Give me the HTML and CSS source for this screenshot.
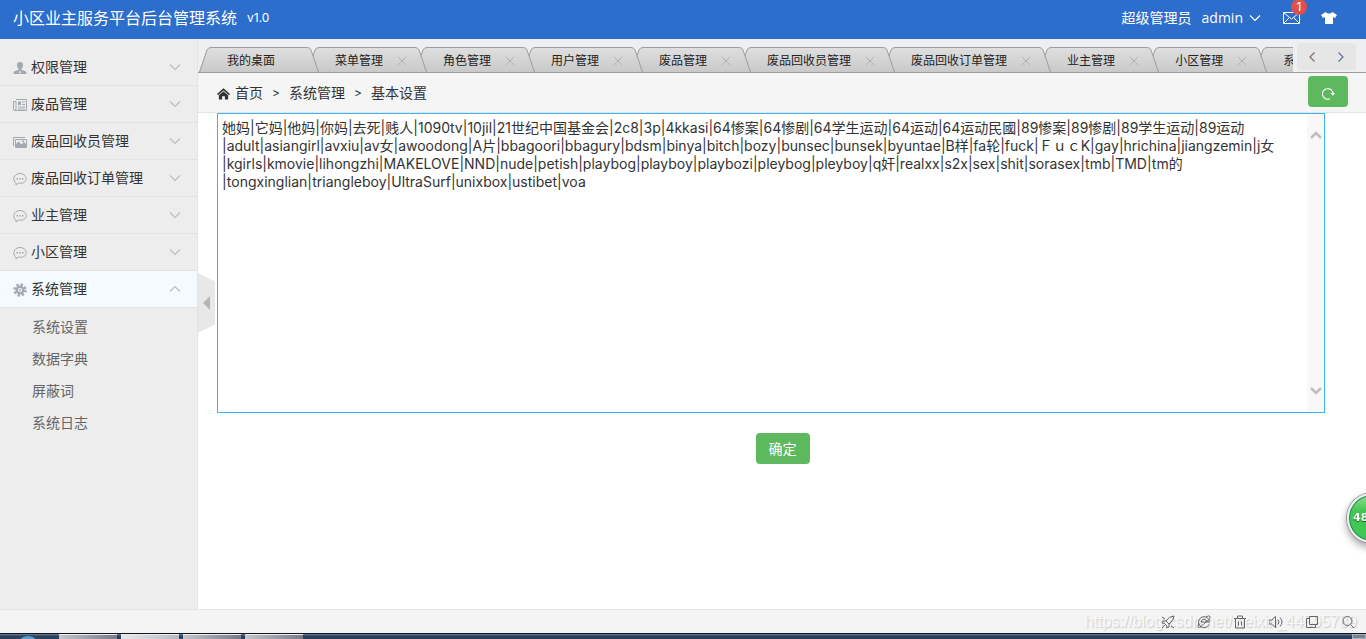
FILE: index.html
```
<!DOCTYPE html>
<html lang="zh-CN">
<head>
<meta charset="utf-8">
<title>小区业主服务平台后台管理系统</title>
<link rel="stylesheet" href="styles.css">
</head>
<body>
<svg class="defs" aria-hidden="true">
  <defs>
    <linearGradient id="tabFill" x1="0" y1="0" x2="0" y2="1"><stop offset="0" stop-color="#dfdfdf"/><stop offset="1" stop-color="#c9c9ca"/></linearGradient>
    <symbol id="down" viewBox="0 0 12 8"><path d="M1 1.5l5 5 5-5" fill="none" stroke="currentColor" stroke-width="1.1"/></symbol>
    <symbol id="chat" viewBox="0 0 14 14"><path d="M3 11.3C-.8 8.500 .3 1.500 7 1.500s8.500 8 2.500 9.500c-2 .5-3.500.2-4 0L3 13z" fill="none" stroke="currentColor"/><path d="M3.500 6h1.500v1.500H3.500zM6.300 6h1.500v1.500H6.300zM9 6h1.500v1.500H9z" fill="currentColor"/></symbol>
    <symbol id="capL" viewBox="0 0 14 25"><path d="M0 25L8 3Q9 .5 12 .5H14V25z" fill="url(#tabFill)"/><path d="M.5 25L8 3Q9 .5 12 .5H14" fill="none" stroke="#9c9c9c"/></symbol>
    <symbol id="capR" viewBox="0 0 14 25"><path d="M14 25L6 3Q5 .5 2 .5H0V25z" fill="url(#tabFill)"/><path d="M13.500 25L6 3Q5 .5 2 .5H0" fill="none" stroke="#9c9c9c"/></symbol>
  </defs>
</svg>
<header class="top">
  <h1 class="brand">小区业主服务平台后台管理系统</h1><span class="version">v1.0</span>
  <div class="user">
    <span>超级管理员</span>
    <button class="plain account">admin <svg class="down"><use href="#down"/></svg></button>
    <button class="plain mail" aria-label="消息"><svg width="17" height="12" viewBox="0 0 17 12"><path d="M.5.500h16v11H.5zM1 1l7.500 6L16 1M1 11l5-5M16 11l-5-5" fill="none" stroke="#fff"/></svg><span class="badge">1</span></button>
    <button class="plain skin" aria-label="换肤"><svg width="16" height="12" viewBox="0 0 16 12"><path d="M4.500 0Q8 3 11.500 0L16 3 14 6 12 5V12H4V5L2 6 0 3z" fill="#fff"/></svg></button>
  </div>
</header>
<div class="body">
  <nav class="side">
    <button class="item"><svg class="ico" viewBox="0 0 14 14"><path d="M7 1c2.200 0 3.300 1.500 3 3.500-.2 1.500-.7 2.500-1.500 3.200v1l4 1.600c.6.300 1 1.200 1 2.700H.5c0-1.500.4-2.400 1-2.700l4-1.600v-1C4.700 7 4.200 6 4 4.500 3.700 2.500 4.800 1 7 1z" fill="currentColor"/><path d="M7 10l1 1-1 2-1-2z" fill="#ededed"/></svg><span>权限管理</span><svg class="down"><use href="#down"/></svg></button>
    <button class="item"><svg class="ico" viewBox="0 0 14 14"><path d="M3 1.500h10.500v11H1.500Q.5 12.500.5 11V3.500H3V11q0 1.500-1.500 1.500M9 4h3M9 6.500h3M5 9h7M5 11h7" fill="none" stroke="currentColor"/><path d="M5 3.500h3V7H5z" fill="currentColor"/></svg><span>废品管理</span><svg class="down"><use href="#down"/></svg></button>
    <button class="item"><svg class="ico" viewBox="0 0 14 14"><path d="M.5 11V2.500H12M2.500 4.500h11v8h-11z" fill="none" stroke="currentColor"/><path d="M3 12V9l2.500-2.500 3 3L11 7l2.500 2.500V12zM9 5.500h2v1.500H9z" fill="currentColor"/></svg><span>废品回收员管理</span><svg class="down"><use href="#down"/></svg></button>
    <button class="item"><svg class="ico"><use href="#chat"/></svg><span>废品回收订单管理</span><svg class="down"><use href="#down"/></svg></button>
    <button class="item"><svg class="ico"><use href="#chat"/></svg><span>业主管理</span><svg class="down"><use href="#down"/></svg></button>
    <button class="item"><svg class="ico"><use href="#chat"/></svg><span>小区管理</span><svg class="down"><use href="#down"/></svg></button>
    <button class="item active" aria-expanded="true"><svg class="ico" viewBox="0 0 14 14"><circle cx="7" cy="7" r="3.300" fill="none" stroke="currentColor" stroke-width="2.400"/><circle cx="7" cy="7" r="5.500" fill="none" stroke="currentColor" stroke-width="2.400" stroke-dasharray="2.300 2.020"/><circle cx="7" cy="7" r="1" fill="currentColor"/></svg><span>系统管理</span><svg class="down up"><use href="#down"/></svg></button>
    <ul class="sub">
      <li><a href="#">系统设置</a></li>
      <li><a href="#">数据字典</a></li>
      <li><a href="#">屏蔽词</a></li>
      <li><a href="#">系统日志</a></li>
    </ul>
  </nav>
  <main class="main">
    <button class="fold" aria-label="收起菜单"><span class="fold-arrow"></span></button>
    <div class="tabbar">
      <ul class="tabs">
        <li class="tab"><svg class="cap"><use href="#capL"/></svg><span class="label">我的桌面</span><svg class="cap"><use href="#capR"/></svg></li>
        <li class="tab"><svg class="cap"><use href="#capL"/></svg><span class="label">菜单管理<svg class="close" viewBox="0 0 8 8"><path d="M0 0l8 8M8 0L0 8"/></svg></span><svg class="cap"><use href="#capR"/></svg></li>
        <li class="tab"><svg class="cap"><use href="#capL"/></svg><span class="label">角色管理<svg class="close" viewBox="0 0 8 8"><path d="M0 0l8 8M8 0L0 8"/></svg></span><svg class="cap"><use href="#capR"/></svg></li>
        <li class="tab"><svg class="cap"><use href="#capL"/></svg><span class="label">用户管理<svg class="close" viewBox="0 0 8 8"><path d="M0 0l8 8M8 0L0 8"/></svg></span><svg class="cap"><use href="#capR"/></svg></li>
        <li class="tab"><svg class="cap"><use href="#capL"/></svg><span class="label">废品管理<svg class="close" viewBox="0 0 8 8"><path d="M0 0l8 8M8 0L0 8"/></svg></span><svg class="cap"><use href="#capR"/></svg></li>
        <li class="tab"><svg class="cap"><use href="#capL"/></svg><span class="label">废品回收员管理<svg class="close" viewBox="0 0 8 8"><path d="M0 0l8 8M8 0L0 8"/></svg></span><svg class="cap"><use href="#capR"/></svg></li>
        <li class="tab"><svg class="cap"><use href="#capL"/></svg><span class="label">废品回收订单管理<svg class="close" viewBox="0 0 8 8"><path d="M0 0l8 8M8 0L0 8"/></svg></span><svg class="cap"><use href="#capR"/></svg></li>
        <li class="tab"><svg class="cap"><use href="#capL"/></svg><span class="label">业主管理<svg class="close" viewBox="0 0 8 8"><path d="M0 0l8 8M8 0L0 8"/></svg></span><svg class="cap"><use href="#capR"/></svg></li>
        <li class="tab"><svg class="cap"><use href="#capL"/></svg><span class="label">小区管理<svg class="close" viewBox="0 0 8 8"><path d="M0 0l8 8M8 0L0 8"/></svg></span><svg class="cap"><use href="#capR"/></svg></li>
        <li class="tab"><svg class="cap"><use href="#capL"/></svg><span class="label">系</span></li>
      </ul>
      <div class="pager">
        <button class="plain" aria-label="向左"><svg width="8" height="12" viewBox="0 0 8 12"><path d="M6.500 1.500L2 6l4.500 4.500" fill="none" stroke="#8b6a5c" stroke-width="1.200"/></svg></button>
        <button class="plain" aria-label="向右"><svg width="8" height="12" viewBox="0 0 8 12"><path d="M1.500 1.500L6 6l-4.500 4.500" fill="none" stroke="#5f7393" stroke-width="1.200"/></svg></button>
      </div>
    </div>
    <div class="crumbs">
      <svg width="13" height="14" viewBox="0 0 14 14"><path d="M7 2l7 6-1 1.300L7 4.300 1 9.300 0 8zM7 5.500l5 4V14H8.500v-3.500h-3V14H2V9.500z" fill="#333"/></svg>
      <a href="#">首页</a><span class="sep">&gt;</span><span>系统管理</span><span class="sep">&gt;</span><span>基本设置</span>
      <button class="refresh" aria-label="刷新"><svg width="14" height="14" viewBox="0 0 14 14"><path d="M9 11.700A5.300 5.300 0 1 1 12 7" fill="none" stroke="#fff" stroke-width="1.100"/><path d="M9.500 6h4.500l-2 2.800z" fill="#fff"/></svg></button>
    </div>
    <form class="form">
      <div class="editor">
        <textarea class="words" aria-label="屏蔽词" spellcheck="false">她妈|它妈|他妈|你妈|去死|贱人|1090tv|10jil|21世纪中国基金会|2c8|3p|4kkasi|64惨案|64惨剧|64学生运动|64运动|64运动民國|89惨案|89惨剧|89学生运动|89运动
|adult|asiangirl|avxiu|av女|awoodong|A片|bbagoori|bbagury|bdsm|binya|bitch|bozy|bunsec|bunsek|byuntae|B样|fa轮|fuck|ＦｕｃK|gay|hrichina|jiangzemin|j女
|kgirls|kmovie|lihongzhi|MAKELOVE|NND|nude|petish|playbog|playboy|playbozi|pleybog|pleyboy|q奸|realxx|s2x|sex|shit|sorasex|tmb|TMD|tm的
|tongxinglian|triangleboy|UltraSurf|unixbox|ustibet|voa</textarea>
        <div class="rail">
          <svg width="12" height="9" viewBox="0 0 12 9"><path d="M1 7l5-5 5 5" fill="none" stroke="#bfbfbf" stroke-width="2.600"/></svg>
          <svg width="12" height="9" viewBox="0 0 12 9"><path d="M1 2l5 5 5-5" fill="none" stroke="#bfbfbf" stroke-width="2.600"/></svg>
        </div>
      </div>
      <button type="button" class="ok">确定</button>
    </form>
  </main>
</div>
<footer class="status">
  <span class="mark">https://blog.csdn.net/weixin_44595789</span>
  <div class="tools">
    <svg viewBox="0 0 14 14"><path d="M13 1Q8 1 5 6l3 3q5-3 5-8zM5 6H2L1 8l3 .5M8 9v3l-2 1-.5-3M1 13l4-4M1 2l3 2M10 11l3 2"/></svg>
    <svg viewBox="0 0 14 14"><path d="M12 9.500A5.500 5.500 0 1 1 12.500 7H4M9 2Q12 0 13 1.500T9 7Q3 13 1.500 12.500T2 8M4 7q1-3 3-3t3 3"/></svg>
    <svg viewBox="0 0 14 14"><path d="M1 3.500h12M4.500 3V1h5v2M2.500 4v9h9V4M5.500 6.500v4M8.500 6.500v4"/></svg>
    <svg viewBox="0 0 14 14"><path d="M0 5v4h2.500l4 3.500v-11L2.500 5zM9 4.500q2 2.500 0 5M11 2.500q4 4.500 0 9"/></svg>
    <svg viewBox="0 0 14 14"><path d="M4.500 1.500h8v8h-8zM4 3.500H1.500v9h9V10"/></svg>
    <svg viewBox="0 0 14 14"><circle cx="6.500" cy="6" r="4.500"/><path d="M9.500 9.500L13 13"/></svg>
  </div>
</footer>
<div class="dock"><i class="orb"></i><i class="task"></i><i class="task lit"></i><i class="task"></i><i class="task"></i><i class="peek"></i></div>
<div class="ball">48</div>
</body>
</html>
```
FILE: styles.css
```
* { box-sizing: border-box; }
body { margin: 0; height: 100vh; display: flex; flex-direction: column; overflow: hidden; font: 14px/20px "Inter", "Noto Sans CJK SC", sans-serif; color: #333; background: #fff; }
button { font: inherit; color: inherit; border: 0; padding: 0; margin: 0; cursor: pointer; }
ul { list-style: none; margin: 0; padding: 0; }
a { color: inherit; text-decoration: none; }
svg { display: block; flex: none; }
.defs { position: absolute; width: 0; height: 0; }
.plain { background: none; display: flex; align-items: center; }
.down { width: 12px; height: 8px; }

.top { height: 39px; flex: none; display: flex; align-items: center; padding: 0 29px 4px 13px; background: #2d6dcc; color: #fff; }
.brand { margin: 0; font-size: 16px; font-weight: 400; }
.version { margin-left: 10px; font-size: 12px; }
.user { margin-left: auto; display: flex; align-items: center; }
.account { margin-left: 10px; gap: 6px; font-family: "Open Sans", sans-serif; }
.mail { margin-left: 22px; position: relative; }
.badge { position: absolute; left: 8px; top: -13px; width: 16px; height: 16px; border-radius: 8px; background: #dd514c; font-size: 12px; line-height: 16px; text-align: center; }
.skin { margin-left: 21px; }

.body { flex: 1; min-height: 0; display: flex; }
.side { width: 198px; flex: none; padding-top: 10px; background: #ededed; border-right: 1px solid #e4e4e4; }
.item { width: 100%; height: 37px; display: flex; align-items: center; gap: 4px; padding: 0 16px 0 13px; border-bottom: 1px solid #e2e2e2; background: none; text-align: left; }
.item .down { margin-left: auto; color: #b9bcc0; }
.item .up { transform: rotate(180deg); }
.item.active { background: #f4faff; }
.ico { width: 14px; height: 14px; margin-top: 2px; color: #a3a8b1; }
.sub { padding: 3px 0 0 32px; line-height: 32px; color: #666; }

.main { flex: 1; min-width: 0; position: relative; }
.fold { position: absolute; left: 0; top: 234px; width: 17px; height: 60px; display: flex; align-items: center; padding-left: 5px; background: #e8e8e8; clip-path: polygon(0 0, 100% 14%, 100% 86%, 0 100%); }
.fold-arrow { border: solid transparent; border-width: 7px 7px 7px 0; border-right-color: #b5b5b5; }
.tabbar { height: 34px; display: flex; padding: 4px 10px 0 1px; background: #efeef0; border-bottom: 1px solid #9c9c9c; }
.tabs { flex: 1; min-width: 0; overflow: hidden; display: flex; padding-top: 4px; margin-right: 4px; }
.tab { display: flex; flex: none; position: relative; height: 25px; margin-right: -12px; font-size: 12px; color: #222; }
.tab:nth-child(1) { z-index: 10; }
.tab:nth-child(2) { z-index: 9; }
.tab:nth-child(3) { z-index: 8; }
.tab:nth-child(4) { z-index: 7; }
.tab:nth-child(5) { z-index: 6; }
.tab:nth-child(6) { z-index: 5; }
.tab:nth-child(7) { z-index: 4; }
.tab:nth-child(8) { z-index: 3; }
.tab:nth-child(9) { z-index: 2; }
.cap { width: 14px; height: 25px; }
.label { display: flex; align-items: center; padding: 2px 30px 0 14px; border-top: 1px solid #9c9c9c; background: linear-gradient(#dfdfdf, #c9c9ca); }
.label:has(.close) { padding-right: 7px; }
.close { width: 8px; height: 8px; margin-left: 15px; stroke: #acb0b6; fill: none; }
.pager { width: 59px; height: 27px; flex: none; display: flex; align-items: center; justify-content: space-between; padding: 0 11px; border-radius: 4px; background: #e6e6e6; }
.crumbs { height: 40px; display: flex; align-items: center; padding: 0 18px 0 19px; background: #f5f5f5; border-bottom: 1px solid #e5e5e5; }
.crumbs a { margin-left: 5px; }
.sep { width: 26px; text-align: center; font-size: 12px; }
.refresh { width: 40px; height: 31px; display: grid; place-items: center; margin: 0 0 2px auto; padding-top: 4px; border-radius: 4px; background: #5eb95e; }
.form { display: flex; flex-direction: column; align-items: center; gap: 20px; padding: 0 18px 0 19px; }
.editor { width: 98%; height: 300px; align-self: flex-start; display: flex; border: 1px solid #3bb4f2; }
.words { flex: 1; min-width: 0; border: 0; outline: 0; resize: none; overflow: hidden; padding: 5px 0 0 4px; margin: 0; background: #fff; font: 14px/18px "Inter", "Noto Sans CJK SC", sans-serif; color: #333; }
.rail { width: 17px; display: flex; flex-direction: column; align-items: center; justify-content: space-between; padding: 17px 0; background: #f8f8f8; }
.ok { width: 54px; height: 31px; border-radius: 4px; background: #5eb95e; color: #fff; }

.status { height: 24px; flex: none; display: flex; align-items: center; justify-content: flex-end; position: relative; padding-right: 11px; border-top: 1px solid #e5e5e5; background: #f4f4f4; }
.mark { position: absolute; right: 9px; top: 2px; font: 16px/20px "Liberation Sans", sans-serif; color: #f8f8f8; text-shadow: 1px 1px 1px #c8c8c8; }
.tools { position: relative; display: flex; gap: 22px; }
.tools svg { width: 14px; height: 14px; fill: none; stroke: #666; }
.dock { height: 6px; flex: none; display: flex; gap: 4px; overflow: hidden; border-top: 1px solid #10161f; background: linear-gradient(#71859b, #2c415c 40%, #2c415c); }
.orb { width: 24px; height: 24px; flex: none; margin: 2px 15px 0 16px; border-radius: 12px; background: #5b9cc8; }
.task { width: 58px; border-top: 1px solid #eee; background: linear-gradient(90deg, #c5c5cc, #777a88); }
.lit { background: linear-gradient(90deg, #e8e8ec, #b9b9c4); }
.peek { width: 14px; margin-left: auto; border: 1px solid #a9b4c0; background: #76828f; }
.ball { position: fixed; right: -31px; top: 493px; width: 50px; height: 50px; border: 2px solid #eee; border-radius: 25px; background: linear-gradient(#8fe08f, #41c653 35%, #3fc854); box-shadow: inset 0 0 0 1px #168a50, 0 0 0 1px #999, 0 4px 8px #999; color: #fff; font: bold 11px/46px "DejaVu Sans", sans-serif; padding-left: 4px; text-shadow: 0 1px 1px #175c2b; }
```
